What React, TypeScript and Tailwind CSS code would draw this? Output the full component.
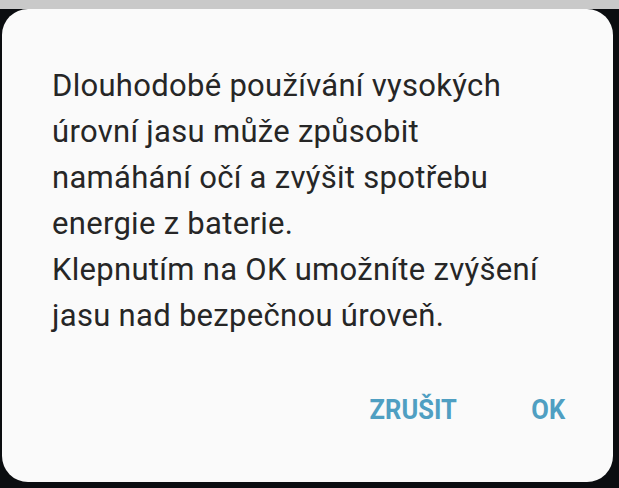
import React from 'react';

const lines = [
  'Dlouhodobé používání vysokých',
  'úrovní jasu může způsobit',
  'namáhání očí a zvýšit spotřebu',
  'energie z baterie.',
  'Klepnutím na OK umožníte zvýšení',
  'jasu nad bezpečnou úroveň.',
];

export default function App() {
  return (
    <div className="w-[619px] h-[488px] flex flex-col bg-[#0b0d10] overflow-hidden" style={{ fontFamily: 'Roboto, "Noto Sans", sans-serif' }}>
      <div className="h-[9px] bg-[#c9c9c9] shrink-0" />
      <div className="flex-1 flex pl-[2px] pr-[6px] pb-[6px]">
        <div className="flex-1 flex flex-col bg-[#fafafa] rounded-[26px]">
          <div className="pl-[50px] pt-[54px] text-[31px] leading-[46px] tracking-[0.3px] text-[#262626]">
            {lines.map((l) => (
              <div key={l}>{l}</div>
            ))}
          </div>
          <div className="flex justify-end items-center gap-[71px] pr-[48px] pt-[54px]">
            <span className="inline-block font-bold text-[28px] leading-[34px] text-[#4f9fc2] scale-x-[0.91] origin-right">ZRUŠIT</span>
            <span className="inline-block font-bold text-[28px] leading-[34px] text-[#4f9fc2] scale-x-[0.91] origin-right">OK</span>
          </div>
        </div>
      </div>
    </div>
  );
}
